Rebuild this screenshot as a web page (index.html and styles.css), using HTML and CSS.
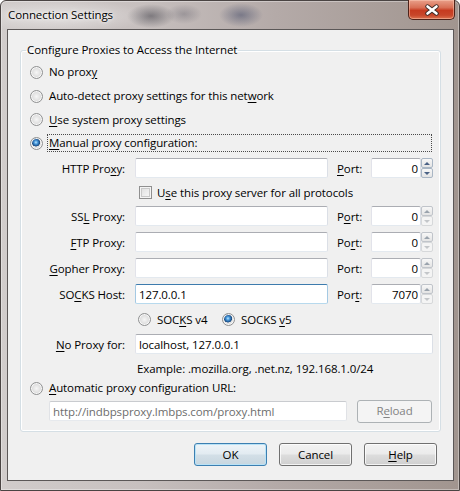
FILE: index.html
```html
<!DOCTYPE html>
<html>
<head>
<meta charset="utf-8">
<title>Connection Settings</title>
<link rel="stylesheet" href="styles.css">
</head>
<body>
<div class="window">
  <div class="titlebar">
    <span class="title">Connection Settings</span>
    <div class="close">
      <svg width="16" height="12" viewBox="0 0 16 12">
        <path d="M3.5 2.5 L12.5 9.5 M12.5 2.5 L3.5 9.5" stroke="#3b2a26" stroke-width="4.4" stroke-linecap="round"/>
        <path d="M3.5 2.5 L12.5 9.5 M12.5 2.5 L3.5 9.5" stroke="#ffffff" stroke-width="2.6" stroke-linecap="round"/>
      </svg>
    </div>
  </div>
  <div class="client">
    <fieldset class="group">
      <legend>Configure Proxies to Access the Internet</legend>
      <div class="opt h24"><span class="radio"></span><span class="lbl">No prox<u>y</u></span></div>
      <div class="opt h24"><span class="radio"></span><span class="lbl">Auto-detect proxy settings for this net<u>w</u>ork</span></div>
      <div class="opt h23"><span class="radio"></span><span class="lbl"><u>U</u>se system proxy settings</span></div>
      <div class="opt h24"><span class="radio on"></span><span class="lbl focus"><u>M</u>anual proxy configuration:</span></div>

      <div class="frow h26">
        <span class="fl">HTTP Pro<u>x</u>y:</span>
        <input class="tb host" value="">
        <span class="pl"><u>P</u>ort:</span>
        <input class="tb port" value="0">
        <div class="spin"><span class="sb up act"></span><span class="sb dn act"></span></div>
      </div>
      <div class="crow h22">
        <span class="check"></span><span>U<u>s</u>e this proxy server for all protocols</span>
      </div>
      <div class="frow h26">
        <span class="fl">SS<u>L</u> Proxy:</span>
        <input class="tb host" value="">
        <span class="pl">P<u>o</u>rt:</span>
        <input class="tb port" value="0">
        <div class="spin"><span class="sb up"></span><span class="sb dn off"></span></div>
      </div>
      <div class="frow h26">
        <span class="fl"><u>F</u>TP Proxy:</span>
        <input class="tb host" value="">
        <span class="pl">Po<u>r</u>t:</span>
        <input class="tb port" value="0">
        <div class="spin"><span class="sb up"></span><span class="sb dn off"></span></div>
      </div>
      <div class="frow h26">
        <span class="fl"><u>G</u>opher Proxy:</span>
        <input class="tb host" value="">
        <span class="pl">Port:</span>
        <input class="tb port" value="0">
        <div class="spin"><span class="sb up"></span><span class="sb dn off"></span></div>
      </div>
      <div class="frow h26">
        <span class="fl">SO<u>C</u>KS Host:</span>
        <input class="tb host hover" value="127.0.0.1">
        <span class="pl">Por<u>t</u>:</span>
        <input class="tb port" value="7070">
        <div class="spin"><span class="sb up"></span><span class="sb dn off"></span></div>
      </div>
      <div class="srow h24">
        <div class="sitem first"><span class="radio"></span><span>SOC<u>K</u>S v4</span></div>
        <div class="sitem"><span class="radio on"></span><span>SOCKS <u>v</u>5</span></div>
      </div>
      <div class="frow h26">
        <span class="fl"><u>N</u>o Proxy for:</span>
        <input class="tb noproxy" value="localhost, 127.0.0.1">
      </div>
      <div class="erow h22">Example: .mozilla.org, .net.nz, 192.168.1.0/24</div>
      <div class="opt h18"><span class="radio"></span><span class="lbl"><u>A</u>utomatic proxy configuration URL:</span></div>
      <div class="urow h28">
        <input class="tb url" value="http://indbpsproxy.lmbps.com/proxy.html" disabled>
        <span class="btn reload">R<u>e</u>load</span>
      </div>
    </fieldset>
    <div class="buttons">
      <span class="btn def">OK</span>
      <span class="btn">Cancel</span>
      <span class="btn"><u>H</u>elp</span>
    </div>
  </div>
</div>
</body>
</html>
```
FILE: styles.css
```css
* { box-sizing: border-box; }
html, body { margin: 0; padding: 0; }
body {
  width: 460px;
  height: 491px;
  overflow: hidden;
  background: #ffffff;
  font-family: "Open Sans", "Segoe UI", sans-serif;
  font-size: 11.5px;
  letter-spacing: -0.1px;
  color: #000;
}
u { text-underline-offset: 2px; text-decoration-thickness: 1px; }

.window {
  width: 460px;
  height: 491px;
  display: flex;
  flex-direction: column;
  padding: 0 5px 9px 6px;
  border: 1px solid #4a4443;
  border-radius: 6px 6px 0 0;
  background:
    radial-gradient(ellipse 24px 12px at 150px 15px, rgba(55,55,65,.5), transparent),
    radial-gradient(ellipse 18px 10px at 183px 13px, rgba(70,70,85,.3), transparent),
    radial-gradient(ellipse 22px 12px at 240px 14px, rgba(45,55,90,.45), transparent),
    radial-gradient(ellipse 90px 16px at 60px 15px, rgba(255,255,255,.45), transparent),
    linear-gradient(90deg, #d1cccb 0%, #c7c0bf 30%, #b4aaa8 60%, #a1958f 100%);
  box-shadow: inset 0 0 0 1px rgba(255,255,255,.35);
}

.titlebar {
  height: 28px;
  flex: none;
  display: flex;
  align-items: flex-start;
  margin-right: -1px;
}
.title {
  padding: 6px 0 0 1px;
  line-height: 16px;
  font-size: 11.5px;
  color: #000;
  text-shadow: 0 0 6px rgba(255,255,255,.9), 0 0 3px rgba(255,255,255,.9);
}
.close {
  margin-left: auto;
  margin-top: -1px;
  width: 47px;
  height: 20px;
  border: 1px solid #4e2219;
  border-top: none;
  border-radius: 0 0 5px 5px;
  background: linear-gradient(#e9a08a 0%, #d86f55 40%, #c63b20 55%, #c8462a 80%, #dc7350 100%);
  box-shadow: inset 0 0 0 1px rgba(255,210,190,.45);
  display: flex;
  align-items: center;
  justify-content: center;
}

.client {
  height: 452px;
  flex: none;
  background: #f0f0f0;
  border: 1px solid #5b5757;
  display: flex;
  flex-direction: column;
}

.group {
  margin: 12px 12px 0 12px;
  padding: 2px 0 6px 0;
  min-width: 0;
  border: 1px solid #d5dfe5;
  border-radius: 3px;
  box-shadow: inset 0 0 0 1px #ffffff;
}
.group legend {
  margin-left: 5px;
  padding: 0 1px;
  line-height: 16px;
}

.h18 { height: 18px; }
.h22 { height: 22px; }
.h23 { height: 23px; }
.h24 { height: 24px; }
.h26 { height: 26px; }
.h28 { height: 28px; }

.opt {
  display: flex;
  align-items: center;
  padding: 0 8px 0 9px;
  gap: 4px;
}
.lbl {
  border: 1px dotted transparent;
  padding: 0 1px;
  line-height: 16px;
}
.lbl.focus {
  flex: 1;
  border-color: #4a4a4a;
}

.radio {
  width: 13px;
  height: 13px;
  flex: none;
  border-radius: 50%;
  border: 1px solid #8f9091;
  background: radial-gradient(circle at 50% 50%, #f6f6f6 0, #e6e6e6 3px, #d9d9d9 5px, #f3f3f3 6px);
  box-shadow: inset 0 0 0 1px #f8f8f8;
}
.radio.on {
  background:
    radial-gradient(circle at 45% 40%, #bfe6fb 0, #4c9ee0 1.6px, #235c98 3.3px, #1b4a7c 3.9px, transparent 4.3px),
    radial-gradient(circle at 50% 50%, #f6f6f6 0, #e6e6e6 3px, #d9d9d9 5px, #f3f3f3 6px);
}

.frow {
  display: flex;
  align-items: center;
}
.fl {
  width: 104px;
  text-align: right;
  flex: none;
}
.tb {
  height: 20px;
  margin: 0;
  border: 1px solid;
  border-color: #abadb3 #dbdfe6 #e3e9ef #e2e3ea;
  border-radius: 2px;
  background: #ffffff;
  padding: 0 3px;
  font-family: "Open Sans", "Segoe UI", sans-serif;
  font-size: 11.5px;
  letter-spacing: -0.1px;
  color: #000;
  outline: none;
  flex: none;
}
.tb.host { width: 193px; margin-left: 10px; }
.tb.hover { border-color: #3d7bad #a4c9e3 #b7d9ed #a4c9e3; }
.pl { width: 34px; margin-left: 9px; flex: none; }
.tb.port { width: 50px; text-align: right; padding-right: 2px; }
.tb.noproxy { width: 298px; margin-left: 10px; }

.spin {
  width: 12px;
  height: 20px;
  display: flex;
  flex-direction: column;
  flex: none;
}
.sb {
  height: 10px;
  border: 1px solid #c0c4ca;
  border-radius: 2px;
  background: linear-gradient(#f7f7f7, #e4e4e4);
  display: flex;
  align-items: center;
  justify-content: center;
}
.sb::after {
  content: "";
  width: 0;
  height: 0;
  border-left: 3px solid transparent;
  border-right: 3px solid transparent;
}
.sb.up::after { border-bottom: 3px solid #9aa3ad; }
.sb.dn::after { border-top: 3px solid #9aa3ad; }
.sb.act { border-color: #a9b6c4; }
.sb.up.act::after { border-bottom-color: #4b6285; }
.sb.dn.act::after { border-top-color: #4b6285; }
.sb.off { border-color: #d6d8da; background: #f4f4f4; }
.sb.dn.off::after { border-top-color: #c3c6c9; }

.crow {
  display: flex;
  align-items: center;
  padding-left: 118px;
  gap: 5px;
}
.check {
  width: 13px;
  height: 13px;
  flex: none;
  border: 1px solid #8f8f8f;
  background: linear-gradient(135deg, #dcdcdc, #fbfbfb);
  box-shadow: inset 0 0 0 1px #f4f4f4, inset 0 0 0 2px #c9c9c9;
}

.srow {
  display: flex;
  align-items: center;
  padding-left: 117px;
}
.sitem {
  display: flex;
  align-items: center;
  gap: 6px;
}
.sitem.first { width: 84px; }

.erow {
  display: flex;
  align-items: center;
  padding-left: 116px;
}

.urow {
  display: flex;
  align-items: center;
  padding-left: 28px;
}
.tb.url {
  width: 298px;
  color: #6d6d6d;
  background: #ffffff;
  border-color: #c9cbcf #e0e2e6 #e6e9ed #e0e2e6;
}

.btn {
  width: 73px;
  height: 23px;
  flex: none;
  border: 1px solid #707070;
  border-radius: 3px;
  background: linear-gradient(#f2f2f2 0%, #ebebeb 48%, #dddddd 52%, #cfcfcf 100%);
  box-shadow: inset 0 0 0 1px rgba(255,255,255,.75);
  display: flex;
  align-items: center;
  justify-content: center;
  line-height: 16px;
}
.btn.def {
  border-color: #3c7fb1;
  background: linear-gradient(#eef4f8 0%, #e2ebf1 48%, #d3dfe7 52%, #c7d6df 100%);
  box-shadow: inset 0 0 0 1px #b9e2f6;
}
.btn.reload {
  width: 75px;
  margin-left: 10px;
  border-color: #adb2b5;
  background: #f4f4f4;
  box-shadow: none;
  color: #838383;
}

.buttons {
  display: flex;
  justify-content: flex-end;
  gap: 12px;
  margin-top: 11px;
  padding-right: 16px;
}
```
